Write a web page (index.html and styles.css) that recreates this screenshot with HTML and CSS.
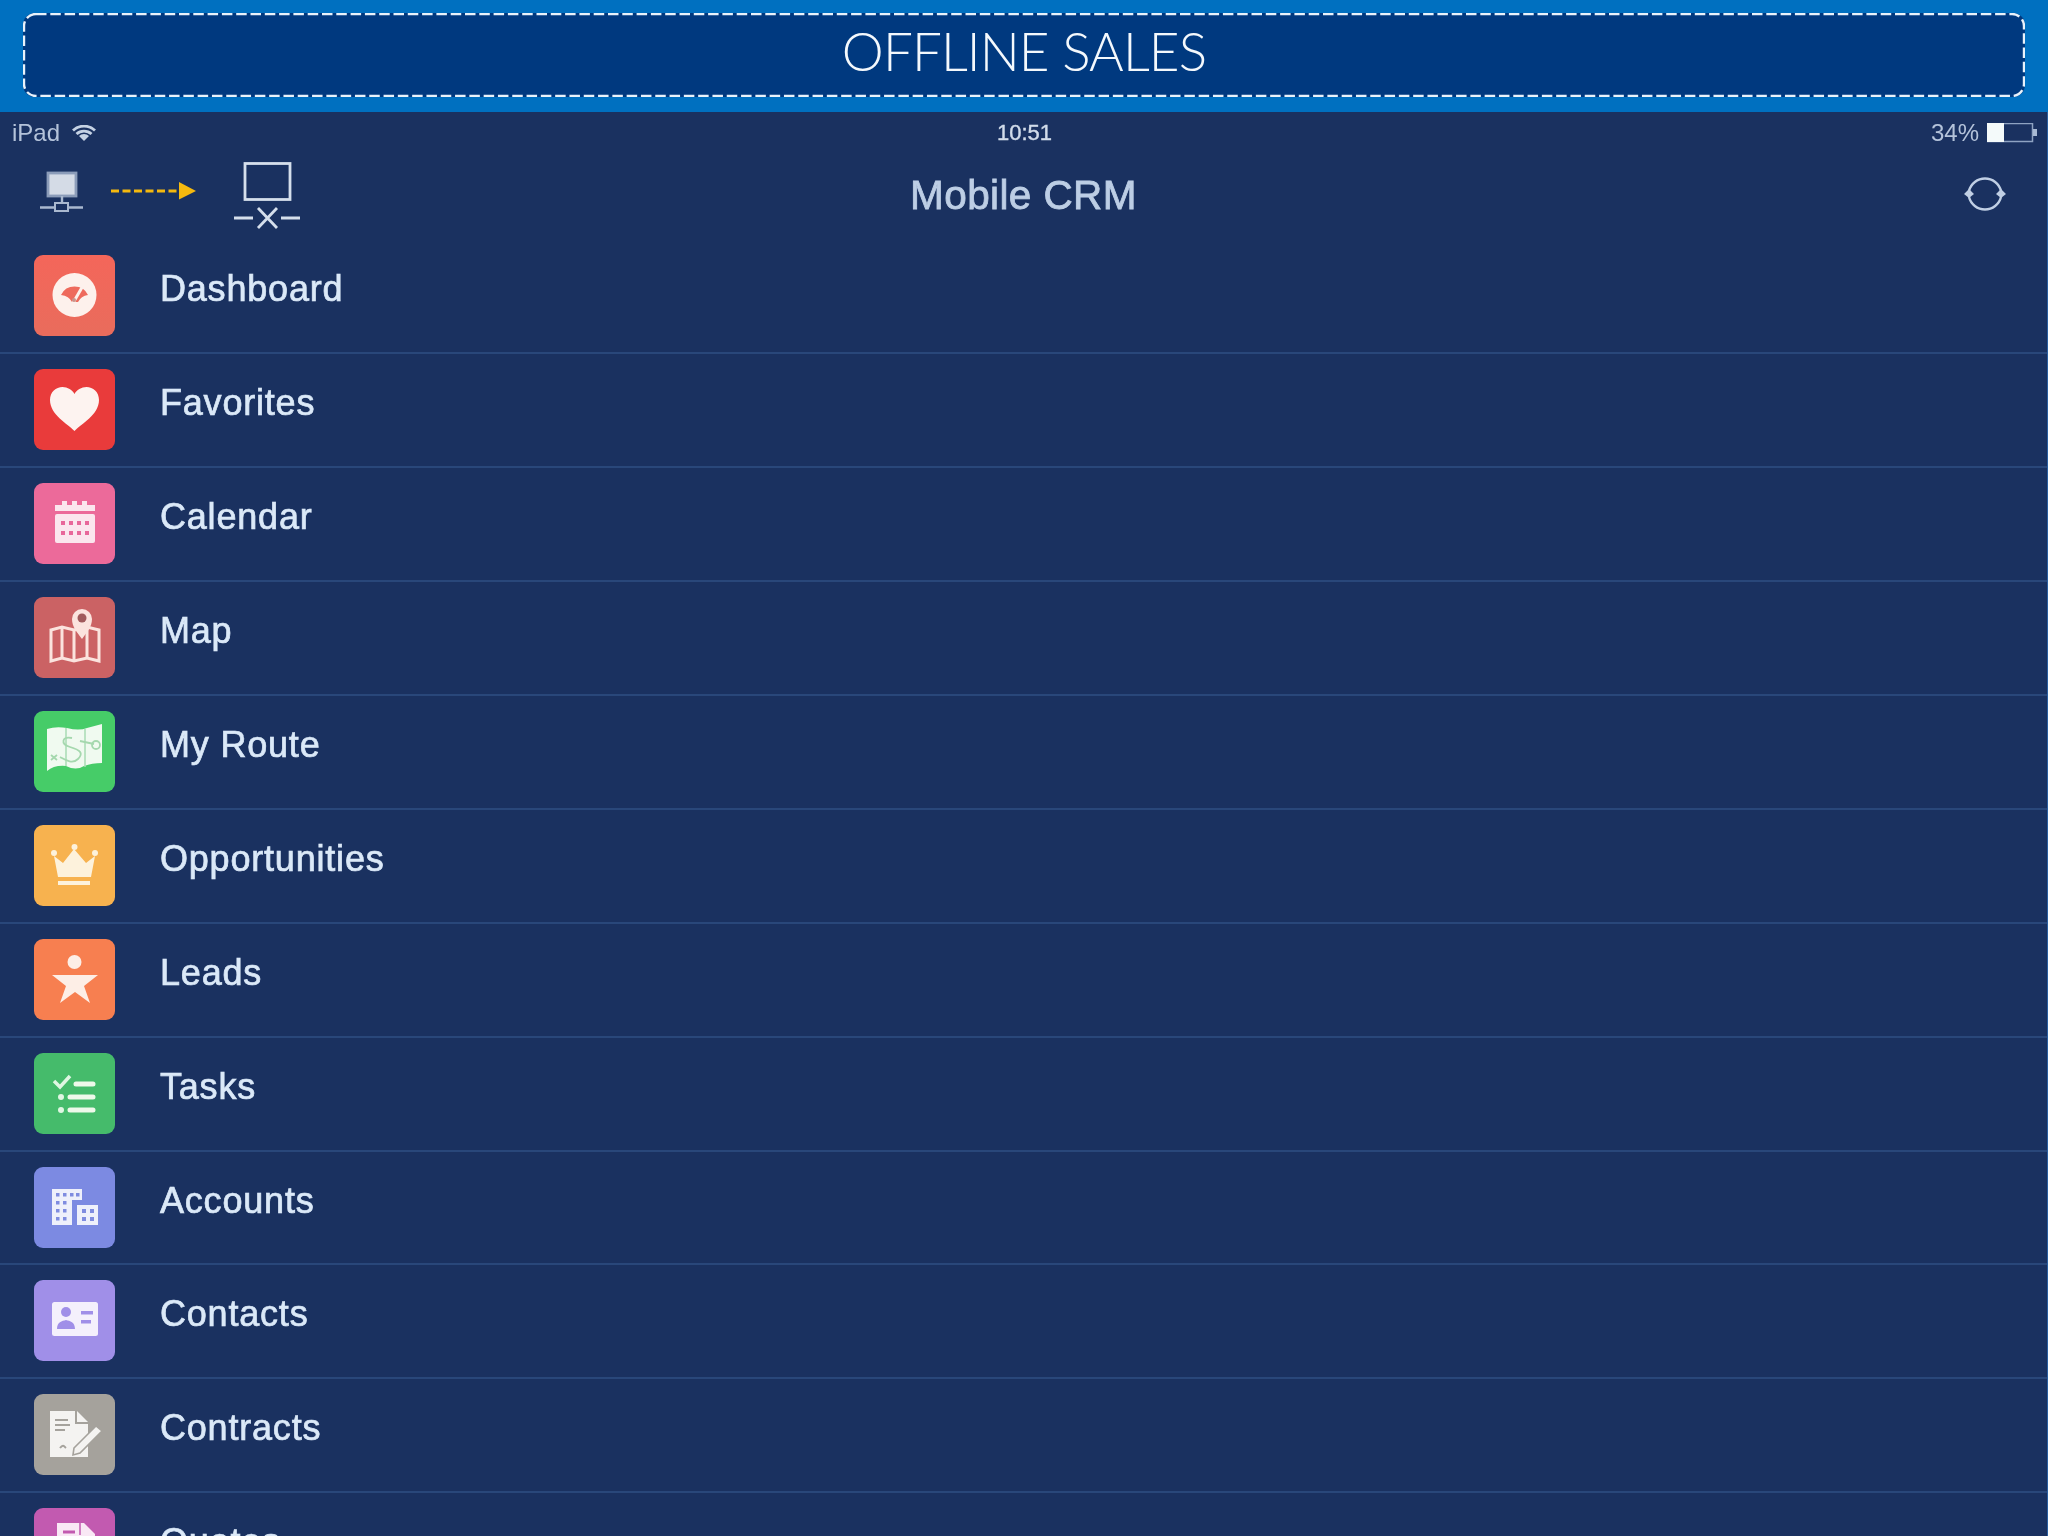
FILE: index.html
```html
<!DOCTYPE html>
<html lang="en">
<head>
<meta charset="utf-8">
<title>Offline Sales</title>
<link rel="stylesheet" href="styles.css">
</head>
<body>
<header class="banner"><div class="banner-box">
  <svg class="banner-dash" viewBox="0 0 2002 84"><rect x="1" y="1" width="2000" height="82" rx="12" fill="none" stroke="#e8f2fb" stroke-width="2.400" stroke-dasharray="10.500 3.800"/></svg>
  <h1 class="banner-title">OFFLINE SALES</h1></div></header>
<main class="screen">
  <div class="status">
    <div class="status-left"><span>iPad</span>
      <svg class="wifi" viewBox="0 0 24 16"><path d="M1 5.500a16 16 0 0 1 22 0M4.500 9a11 11 0 0 1 15 0" fill="none" stroke="#c5d2e4" stroke-width="2.800"/><path d="M12 16l-5-5a7 7 0 0 1 10 0z" fill="#c5d2e4"/></svg>
    </div>
    <div class="status-time">10:51</div>
    <div class="status-right"><span>34%</span>
      <svg class="battery" viewBox="0 0 50 20"><rect x="0.500" y="0.500" width="45" height="18" fill="none" stroke="#8fa3c2" stroke-width="1.500"/><rect x="0" y="0" width="17" height="19" fill="#f4fafa"/><rect x="46" y="6" width="4" height="7" fill="#a9bad4"/></svg>
    </div>
  </div>
  <div class="toolbar">
    <div class="net">
      <svg class="net-svg" viewBox="0 0 270 70">
        <g transform="translate(-40,-160)">
          <rect x="48" y="173" width="28" height="23" fill="#d4dbe6" stroke="#8b9cb9" stroke-width="2.800"/>
          <path d="M62 196v7M40 207.500h15M68 207.500h15" stroke="#a9b8cf" stroke-width="2.400" fill="none"/>
          <rect x="55" y="203" width="13" height="8" fill="none" stroke="#a9b8cf" stroke-width="2"/>
          <path d="M111 191h66" stroke="#f5b90f" stroke-width="3" stroke-dasharray="8 3.500" fill="none"/>
          <path d="M179 182l17 9-17 8.500z" fill="#f5b90f"/>
          <rect x="245" y="163.500" width="45" height="36" fill="none" stroke="#d5dfec" stroke-width="2.800"/>
          <path d="M234 218h19M281 218h19M258 208l19 20M277 208l-19 20" stroke="#d5dfec" stroke-width="2.800" fill="none"/>
        </g>
      </svg>
    </div>
    <div class="app-title">Mobile CRM</div>
    <svg class="sync" viewBox="0 0 44 44"><path d="M6 19a16.500 16.500 0 0 1 32 0M38 25a16.500 16.500 0 0 1-32 0" fill="none" stroke="#c0cfe4" stroke-width="2.400"/><path d="M1 22l5-5 5 5-5 4zM33 22l5-5 5 5-5 4z" fill="#c0cfe4"/></svg>
  </div>
  <ul class="menu">
    <li class="row"><span class="tile t-dash"><svg viewBox="0 0 81 81"><circle cx="40.500" cy="40" r="22" fill="#fdf1ec"/><path d="M27 40A15 15 0 0 1 54 40Q47 41 44 47L38 47Q35 41 27 40z" fill="#ee6a5c"/><path d="M39 48L50 29" stroke="#fdf1ec" stroke-width="3" fill="none"/><circle cx="40" cy="45" r="2" fill="#c9938a"/></svg></span><span class="label">Dashboard</span></li>
    <li class="row"><span class="tile t-fav"><svg viewBox="0 0 81 81"><path d="M40.500 62C34 55 16 46 16 31c0-8 6-13 12.500-13 5 0 10 3 12 7 2-4 7-7 12-7C59 18 65 23 65 31c0 15-18 24-24.500 31z" fill="#fdf3f0"/></svg></span><span class="label">Favorites</span></li>
    <li class="row"><span class="tile t-cal"><svg viewBox="0 0 81 81"><path d="M21 22h7v-4h5v4h5v-4h5v4h5v-4h5v4h8v6H21z" fill="#fbe6ee"/><rect x="21" y="31" width="40" height="29" rx="2" fill="#fbe6ee"/><g fill="#e8679a"><rect x="27" y="38" width="4" height="4"/><rect x="35" y="38" width="4" height="4"/><rect x="43" y="38" width="4" height="4"/><rect x="51" y="38" width="4" height="4"/><rect x="27" y="48" width="4" height="4"/><rect x="35" y="48" width="4" height="4"/><rect x="43" y="48" width="4" height="4"/><rect x="51" y="48" width="4" height="4"/></g></svg></span><span class="label">Calendar</span></li>
    <li class="row"><span class="tile t-map"><svg viewBox="0 0 81 81"><path d="M17 33l11-3 12 3 13-3 12 3v31l-12-3-13 3-12-3-11 3z" fill="none" stroke="#fbe3de" stroke-width="3"/><path d="M28 30v31M40 33v31M53 30v31" stroke="#fbe3de" stroke-width="3" fill="none"/><path d="M48 42c-5-7-10-12-10-20a10 10 0 0 1 20 0c0 8-5 13-10 20z" fill="#fbe3de"/><circle cx="48" cy="21" r="4.500" fill="#a05a5c"/></svg></span><span class="label">Map</span></li>
    <li class="row"><span class="tile t-route"><svg viewBox="0 0 81 81"><path d="M13 18Q22 15 33 17Q45 20 53 17L68 13V52Q58 52 50 55Q42 60 32 55Q20 54 13 60z" fill="#f0faf0"/><path d="M32 17v38M51 18v38" stroke="#a8dcb4" stroke-width="1.500" fill="none"/><path d="M38 27C28 25 26 33 36 36S50 42 44 48 30 48 26 46M46 30l14 3M17 44l6 5M23 44l-6 5" stroke="#a5d8ae" stroke-width="1.800" fill="none"/><circle cx="62" cy="34" r="4" fill="none" stroke="#a5d8ae" stroke-width="1.800"/></svg></span><span class="label">My Route</span></li>
    <li class="row"><span class="tile t-opp"><svg viewBox="0 0 81 81"><path d="M20 31l9 7 11-14 12 14 9-7-4 21H24z" fill="#fdf2dc"/><circle cx="20" cy="28" r="3" fill="#fdf2dc"/><circle cx="61" cy="28" r="3" fill="#fdf2dc"/><circle cx="40.500" cy="22" r="3" fill="#fdf2dc"/><rect x="24" y="56" width="32" height="4" fill="#fdf2dc"/></svg></span><span class="label">Opportunities</span></li>
    <li class="row"><span class="tile t-lead"><svg viewBox="0 0 81 81"><circle cx="40.500" cy="23" r="7" fill="#fdeee6"/><path d="M18 36H64L50 47L56 64L41 53L26 64L32 47z" fill="#fdeee6"/></svg></span><span class="label">Leads</span></li>
    <li class="row"><span class="tile t-task"><svg viewBox="0 0 81 81"><path d="M20 28l6 6 10-11" stroke="#dff6e2" stroke-width="3.500" fill="none"/><path d="M42 31h17M36 44h23M36 57h23" stroke="#eef9ea" stroke-width="5" stroke-linecap="round" fill="none"/><circle cx="27" cy="44" r="3" fill="#dff6e2"/><circle cx="27" cy="57" r="3" fill="#dff6e2"/></svg></span><span class="label">Tasks</span></li>
    <li class="row"><span class="tile t-acct"><svg viewBox="0 0 81 81"><path d="M18 22h30v11H38v25H18z" fill="#eef0fb"/><rect x="43" y="38" width="21" height="20" fill="#eef0fb"/><g fill="#7f8ce0"><rect x="22" y="26" width="3.500" height="3.500"/><rect x="29" y="26" width="3.500" height="3.500"/><rect x="36" y="26" width="3.500" height="3.500"/><rect x="42" y="26" width="3.500" height="3.500"/><rect x="22" y="34" width="3.500" height="3.500"/><rect x="29" y="34" width="3.500" height="3.500"/><rect x="22" y="42" width="3.500" height="3.500"/><rect x="29" y="42" width="3.500" height="3.500"/><rect x="22" y="50" width="3.500" height="3.500"/><rect x="29" y="50" width="3.500" height="3.500"/><rect x="48" y="42" width="4" height="4"/><rect x="56" y="42" width="4" height="4"/><rect x="48" y="50" width="4" height="4"/><rect x="56" y="50" width="4" height="4"/></g></svg></span><span class="label">Accounts</span></li>
    <li class="row"><span class="tile t-cont"><svg viewBox="0 0 81 81"><rect x="18" y="22" width="46" height="34" rx="2.500" fill="#f4f0fc"/><circle cx="32" cy="32" r="5" fill="#a08fe8"/><path d="M23 49c0-7 5-8 9-9 4 1 9 2 9 9z" fill="#a08fe8"/><rect x="47" y="31" width="12" height="3.500" fill="#a08fe8"/><rect x="47" y="40" width="10" height="3.500" fill="#a08fe8"/></svg></span><span class="label">Contacts</span></li>
    <li class="row"><span class="tile t-contr"><svg viewBox="0 0 81 81"><path d="M16 17h25v13h13v33H16z" fill="#f4f3f1"/><path d="M43 17l11 11H43z" fill="#f4f3f1"/><path d="M21 26h13M21 31h15M21 36h10M26 54c3-4 4-2 6 0" stroke="#a5a29c" stroke-width="2" fill="none"/><path d="M40 54l22-22 6 5-22 22-7 2z" fill="#f4f3f1" stroke="#a5a29c" stroke-width="1.600"/></svg></span><span class="label">Contracts</span></li>
    <li class="row"><span class="tile t-quote"><svg viewBox="0 0 81 81"><path d="M23 15h27l11 11v35H23z" fill="#f9e8f5"/><path d="M29 24h12" stroke="#c25ab0" stroke-width="3" fill="none"/><path d="M46 15v12" stroke="#c25ab0" stroke-width="1.500" fill="none"/></svg></span><span class="label">Quotes</span></li>
  </ul>
</main>
</body>
</html>
```
FILE: styles.css
```css
* { box-sizing: border-box; }
html, body { margin: 0; padding: 0; }
body {
  width: 2048px;
  height: 1536px;
  overflow: hidden;
  background: #1a3160;
  font-family: "Liberation Sans", Arial, sans-serif;
}
.banner {
  height: 112px;
  padding: 13px 23px 15px;
  background: #0070c0;
}
.banner-box {
  position: relative;
  height: 84px;
  padding-bottom: 9px;
  display: flex;
  align-items: center;
  justify-content: center;
  background: #00397f;
  border-radius: 12px;
}
.banner-dash {
  position: absolute;
  left: 0;
  top: 0;
  width: 100%;
  height: 100%;
}
.banner-title {
  margin: 0;
  font-family: "Lato", "Open Sans", sans-serif;
  font-weight: 300;
  font-size: 53px;
  line-height: 1;
  color: #f4f9fd;
  letter-spacing: -0.900px;
}
.screen {
  height: 1424px;
  overflow: hidden;
  background: #1a3160;
  border-right: 1px solid #2a5fa0;
}
.status {
  height: 42px;
  padding: 0 10px 0 12px;
  display: grid;
  grid-template-columns: 1fr auto 1fr;
  align-items: center;
  color: #b4c3da;
  font-size: 24px;
  filter: blur(0.6px);
}
.status-left { display: flex; align-items: center; gap: 12px; }
.wifi { width: 24px; height: 16px; }
.status-time { color: #d2dcea; font-size: 22px; -webkit-text-stroke: 0.4px #d2dcea; }
.status-right { display: flex; align-items: center; justify-content: flex-end; gap: 8px; }
.battery { width: 50px; height: 20px; }
.toolbar {
  height: 86px;
  display: grid;
  grid-template-columns: 1fr auto 1fr;
  align-items: start;
  filter: blur(0.5px);
}
.net { padding: 6px 0 0 40px; }
.net-svg { display: block; width: 270px; height: 70px; }
.app-title {
  margin-top: 18px;
  color: #bdcee5;
  font-size: 40.500px;
  letter-spacing: 0.400px;
  line-height: 46px;
  -webkit-text-stroke: 0.8px #bdcee5;
}
.sync { justify-self: end; width: 44px; height: 44px; margin: 18px 40px 0 0; }
.menu { list-style: none; margin: 0; padding: 0; filter: blur(0.5px); }
.row {
  height: 113.950px;
  padding: 15px 0 0 34px;
  display: flex;
  align-items: flex-start;
  gap: 45px;
  border-bottom: 2px solid #29477a;
}
.tile {
  flex: none;
  display: block;
  width: 81px;
  height: 81px;
  border-radius: 9px;
}
.tile svg { display: block; width: 81px; height: 81px; }
.label {
  margin-top: 13px;
  font-size: 36px;
  letter-spacing: 0.800px;
  line-height: 42px;
  color: #dbe9f8;
  -webkit-text-stroke: 0.7px #dbe9f8;
}
.t-dash { background: linear-gradient(#f4665a, #e96c5c); }
.t-fav { background: #e93b3b; }
.t-cal { background: #ec6a9a; }
.t-map { background: #cb6264; }
.t-route { background: #46cc68; }
.t-opp { background: #f7b24f; }
.t-lead { background: #f77f50; }
.t-task { background: #45bb6b; }
.t-acct { background: #7c8ae2; }
.t-cont { background: #a08fe8; }
.t-contr { background: #a5a29c; }
.t-quote { background: #c25ab0; }
```
